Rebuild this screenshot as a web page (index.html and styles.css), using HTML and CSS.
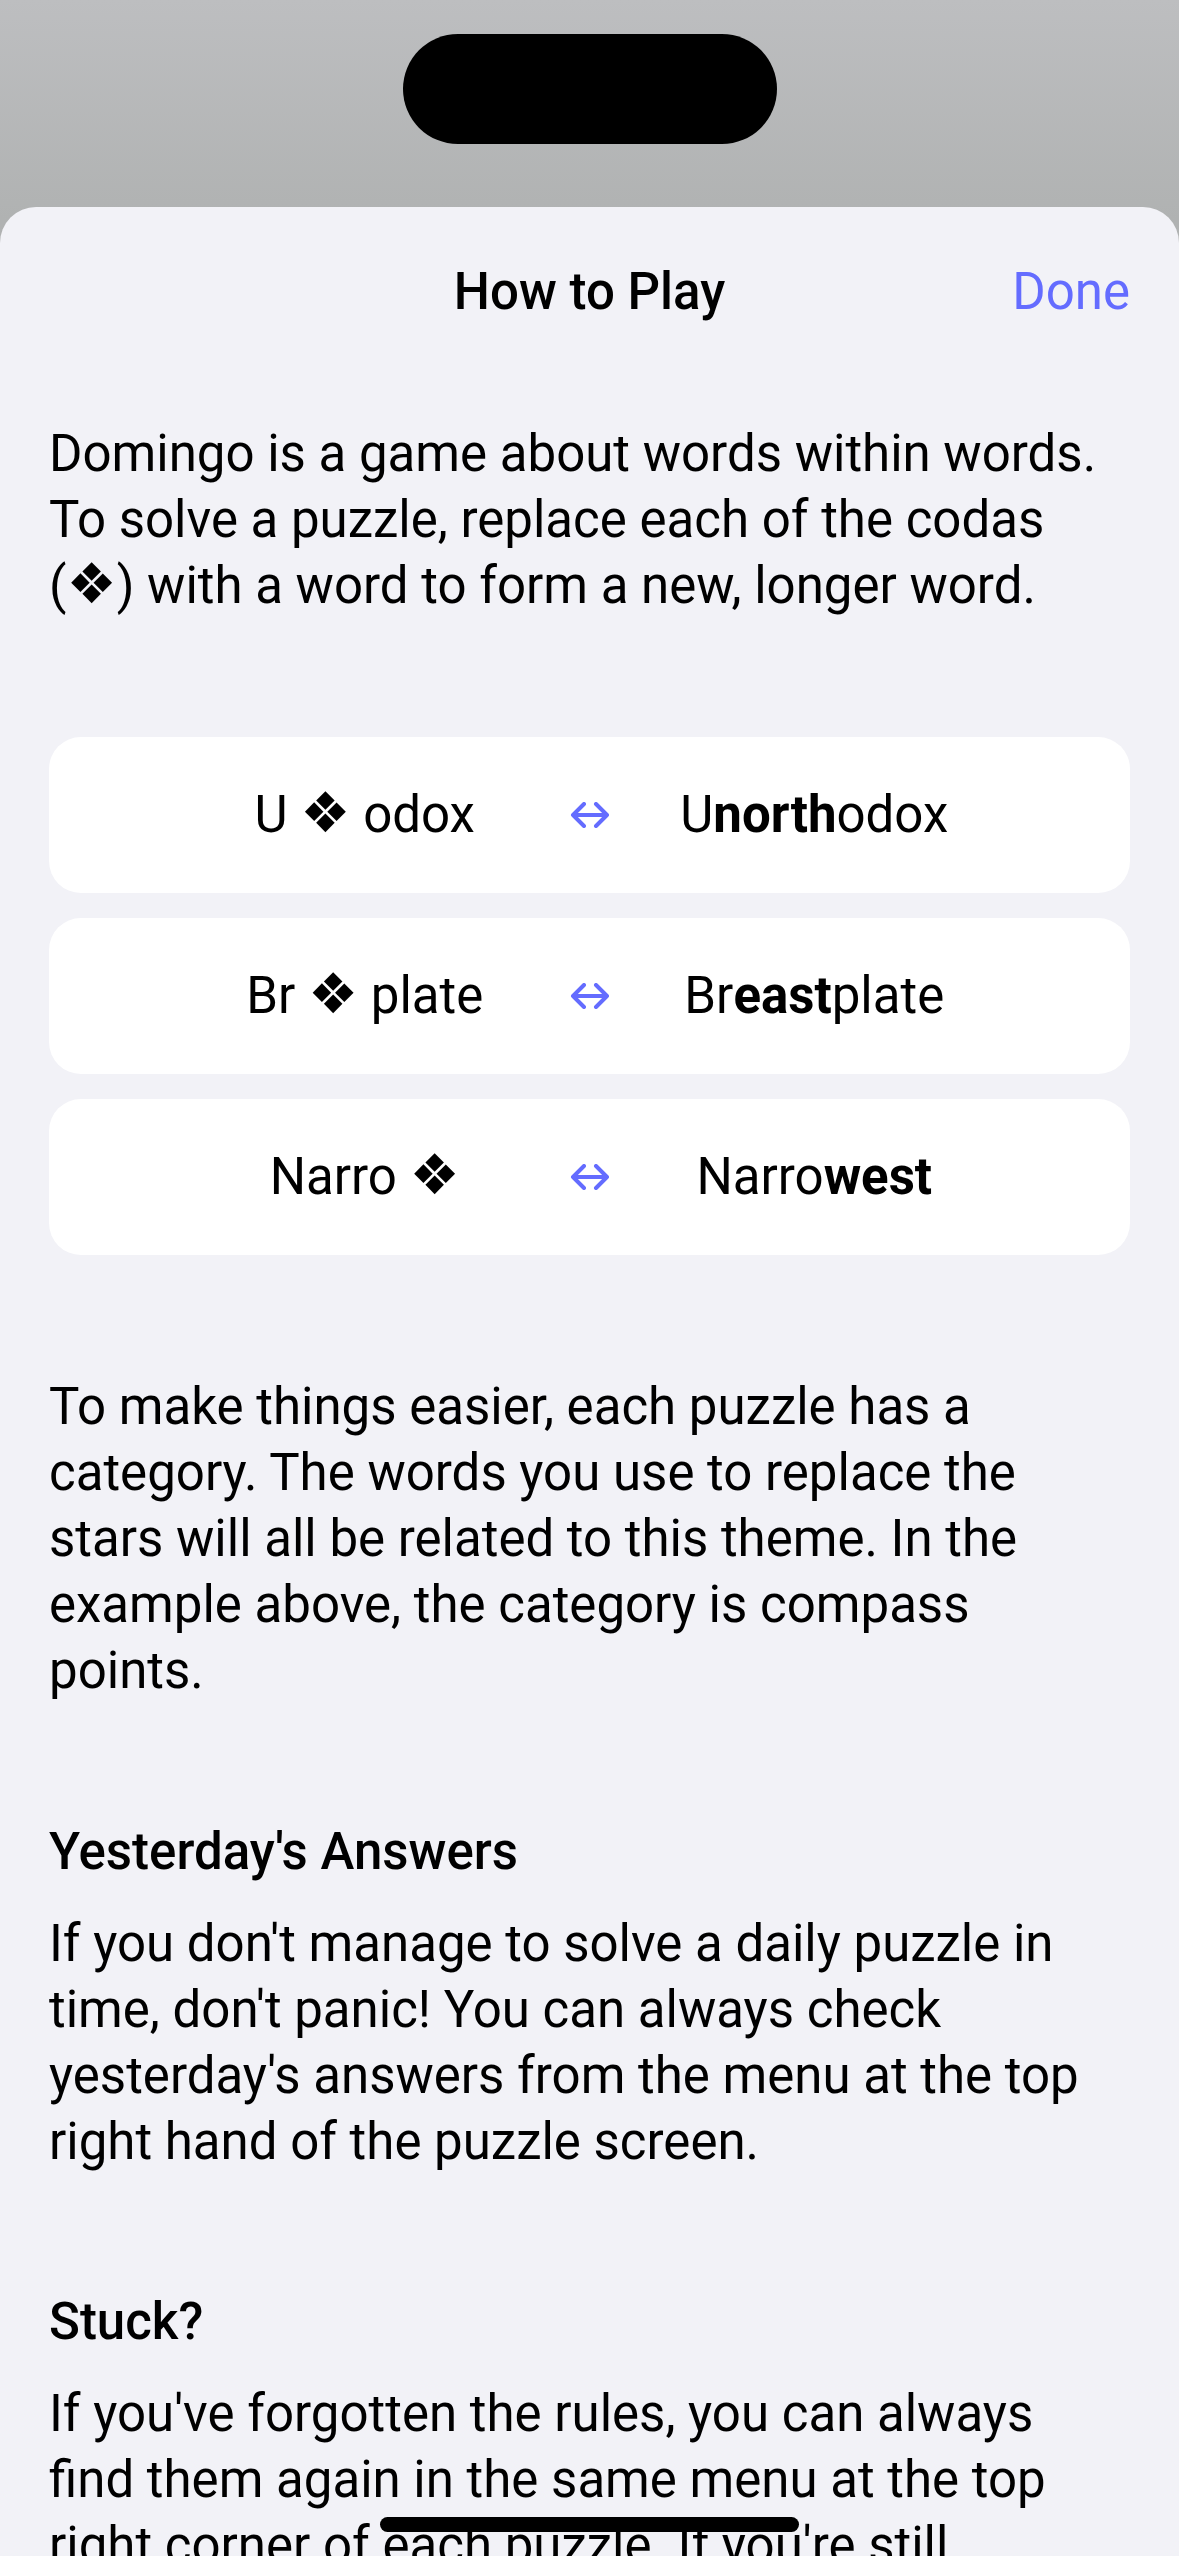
FILE: index.html
```html
<!DOCTYPE html>
<html lang="en">
<head>
<meta charset="utf-8">
<title>How to Play</title>
<link rel="stylesheet" href="styles.css">
</head>
<body>
<div class="screen">
  <div class="backdrop">
    <div class="island"></div>
  </div>
  <div class="sheet">
    <div class="navbar">
      <div class="nav-side"></div>
      <div class="nav-title">How to Play</div>
      <div class="nav-side nav-done">Done</div>
    </div>
    <div class="content">
      <p class="para intro">Domingo is a game about words within words. To solve a puzzle, replace each of the codas (<span class="coda">❖</span>) with a word to form a new, longer word.</p>

      <div class="examples">
        <div class="example">
          <div class="clue">U <span class="coda">❖</span> odox</div>
          <svg class="swap" viewBox="0 0 40 26" width="40" height="26"><path d="M3 13 H37 M14 2 L3 13 L14 24 M26 2 L37 13 L26 24" fill="none" stroke="currentColor" stroke-width="4" stroke-linecap="round" stroke-linejoin="round"/></svg>
          <div class="answer">U<b>north</b>odox</div>
        </div>
        <div class="example">
          <div class="clue">Br <span class="coda">❖</span> plate</div>
          <svg class="swap" viewBox="0 0 40 26" width="40" height="26"><path d="M3 13 H37 M14 2 L3 13 L14 24 M26 2 L37 13 L26 24" fill="none" stroke="currentColor" stroke-width="4" stroke-linecap="round" stroke-linejoin="round"/></svg>
          <div class="answer">Br<b>east</b>plate</div>
        </div>
        <div class="example">
          <div class="clue">Narro <span class="coda">❖</span></div>
          <svg class="swap" viewBox="0 0 40 26" width="40" height="26"><path d="M3 13 H37 M14 2 L3 13 L14 24 M26 2 L37 13 L26 24" fill="none" stroke="currentColor" stroke-width="4" stroke-linecap="round" stroke-linejoin="round"/></svg>
          <div class="answer">Narro<b>west</b></div>
        </div>
      </div>

      <p class="para category">To make things easier, each puzzle has a category. The words you use to replace the stars will all be related to this theme. In the example above, the category is compass points.</p>

      <section class="section section-first">
        <h2 class="heading">Yesterday's Answers</h2>
        <p class="para">If you don't manage to solve a daily puzzle in time, don't panic! You can always check yesterday's answers from the menu at the top right hand of the puzzle screen.</p>
      </section>

      <section class="section">
        <h2 class="heading">Stuck?</h2>
        <p class="para">If you've forgotten the rules, you can always find them again in the same menu at the top right corner of each puzzle. If you're still struggling, you can reveal a letter from the same menu.</p>
      </section>
    </div>
  </div>
  <div class="home-indicator"></div>
</div>
</body>
</html>
```

FILE: styles.css
```css
* { box-sizing: border-box; }

html, body {
  margin: 0;
  padding: 0;
}

body {
  width: 1179px;
  height: 2556px;
  overflow: hidden;
  font-family: Roboto, "Liberation Sans", sans-serif;
  color: #000;
  background: linear-gradient(#bdbec0 0px, #b0b2b2 220px, #b0b2b2 100%);
}

.screen {
  position: relative;
  width: 1179px;
  height: 2556px;
  display: flex;
  flex-direction: column;
}

.backdrop {
  height: 207px;
  flex: none;
  display: flex;
  justify-content: center;
  padding-top: 34px;
}

.island {
  width: 374px;
  height: 110px;
  border-radius: 55px;
  background: #000;
}

.sheet {
  flex: 1;
  background: #f2f2f7;
  border-radius: 36px 36px 0 0;
  overflow: hidden;
}

.navbar {
  display: grid;
  grid-template-columns: 1fr auto 1fr;
  align-items: center;
  padding: 54px 49px 0;
  height: 116px;
  font-size: 51px;
  line-height: 62px;
}

.nav-title {
  font-weight: 500;
}

.nav-done {
  text-align: right;
  color: #646cff;
}

.content {
  padding: 0 49px;
}

.para {
  margin: 0;
  font-size: 51px;
  line-height: 66px;
}

.intro {
  margin-top: 98px;
}

.coda {
  font-family: "DejaVu Sans", sans-serif;
  font-size: 56px;
  line-height: 0;
}

.examples {
  margin-top: 118px;
  display: flex;
  flex-direction: column;
  gap: 25px;
}

.example {
  height: 156px;
  background: #fff;
  border-radius: 32px;
  display: grid;
  grid-template-columns: 1fr auto 1fr;
  align-items: center;
  column-gap: 24px;
  padding: 0 135px;
  font-size: 51px;
  line-height: 62px;
  text-align: center;
}

.example b {
  font-weight: 700;
}

.swap {
  display: block;
  color: #646cff;
  width: 40px;
  height: 26px;
}

.category {
  margin-top: 119px;
}

.section {
  margin-top: 114px;
}

.section-first {
  margin-top: 115px;
}

.heading {
  margin: 0 0 26px;
  font-size: 51px;
  line-height: 66px;
  font-weight: 500;
}

.home-indicator {
  position: absolute;
  left: 380px;
  bottom: 24px;
  width: 419px;
  height: 15px;
  border-radius: 8px;
  background: #000;
}
```
